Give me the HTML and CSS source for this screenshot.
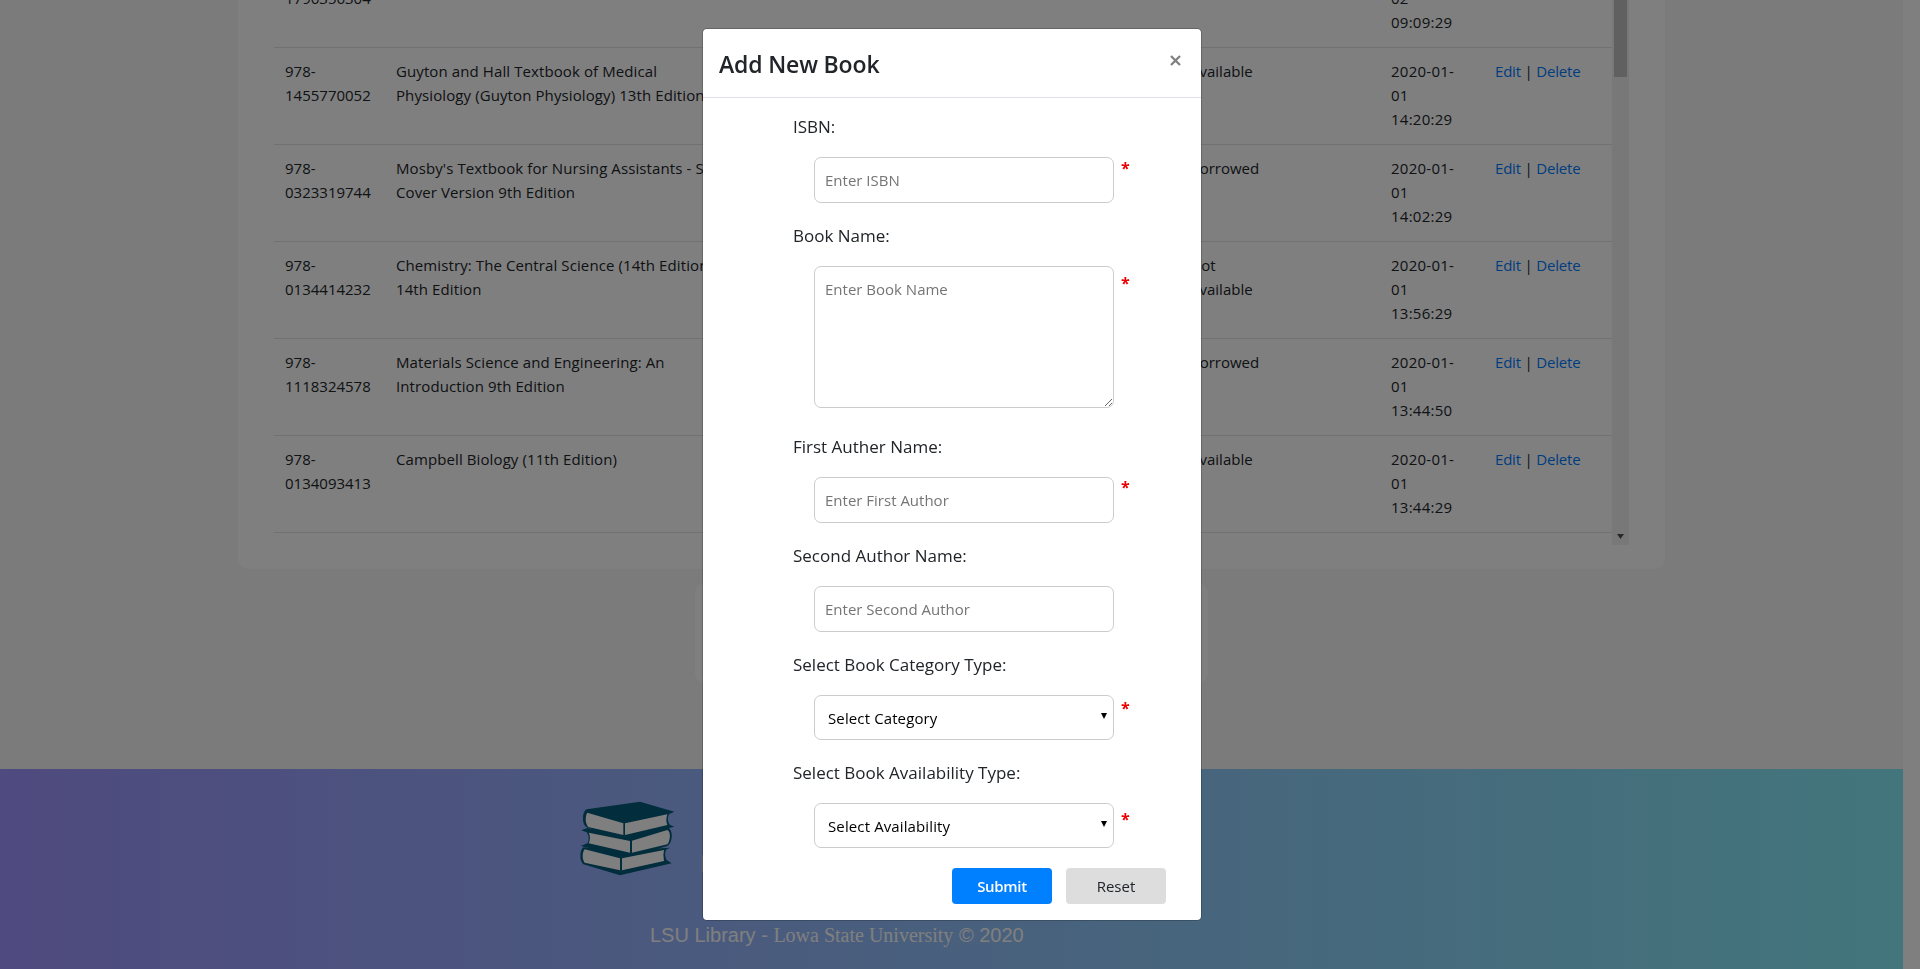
FILE: index.html
```html
<!DOCTYPE html>
<html lang="en">
<head>
<meta charset="utf-8">
<title>LSU Library</title>
<link rel="stylesheet" href="styles.css">
</head>
<body>
<div class="page">
  <main class="main">
    <section class="card">
      <div class="table-wrap">
        <table class="books">
          <colgroup><col class="c-isbn"><col class="c-name"><col class="c-status"><col class="c-date"><col class="c-action"></colgroup>
          <tbody>
            <tr><td>978-<br>1796356304</td><td></td><td></td><td class="date">2020-01-<br>02<br>09:09:29</td><td></td></tr>
            <tr><td>978-<br>1455770052</td><td class="name">Guyton and Hall Textbook of Medical<br>Physiology (Guyton Physiology) 13th Edition</td><td>Available</td><td class="date">2020-01-<br>01<br>14:20:29</td><td class="action"><a>Edit</a> | <a>Delete</a></td></tr>
            <tr><td>978-<br>0323319744</td><td class="name">Mosby's Textbook for Nursing Assistants - Soft<br>Cover Version 9th Edition</td><td>Borrowed</td><td class="date">2020-01-<br>01<br>14:02:29</td><td class="action"><a>Edit</a> | <a>Delete</a></td></tr>
            <tr><td>978-<br>0134414232</td><td class="name">Chemistry: The Central Science (14th Edition)<br>14th Edition</td><td>Not<br>Available</td><td class="date">2020-01-<br>01<br>13:56:29</td><td class="action"><a>Edit</a> | <a>Delete</a></td></tr>
            <tr><td>978-<br>1118324578</td><td class="name">Materials Science and Engineering: An<br>Introduction 9th Edition</td><td>Borrowed</td><td class="date">2020-01-<br>01<br>13:44:50</td><td class="action"><a>Edit</a> | <a>Delete</a></td></tr>
            <tr><td>978-<br>0134093413</td><td class="name">Campbell Biology (11th Edition)</td><td>Available</td><td class="date">2020-01-<br>01<br>13:44:29</td><td class="action"><a>Edit</a> | <a>Delete</a></td></tr>
          </tbody>
        </table>
      </div>
      <div class="scrollbar">
        <div class="thumb"></div>
        <svg class="scroll-arrow" width="7" height="5" viewBox="0 0 7 5"><path d="M0 0h7L3.500 5z" fill="#505050"/></svg>
      </div>
    </section>
    <section class="card small"></section>
  </main>
  <footer class="footer">
    <div class="brand">
      <svg class="logo" viewBox="0 0 285 228" width="95" height="76">
        <g fill="#045a78">
          <path d="M10 142C-2 150 -2 185 10 193L120 226 275 190 260 180C254 170 254 155 260 148L270 143 150 150z"/>
          <path d="M4 91L22 84 140 105 262 82C282 90 278 130 262 138L150 170 2 138 22 130C28 122 28 108 20 97z"/>
          <path d="M20 28C5 35 5 75 20 82L130 118 283 80 270 75C262 65 262 50 268 42L283 35 180 5z"/>
        </g>
        <g fill="#fff">
          <path d="M22 38L130 70V105L25 81C15 70 15 50 22 38z"/>
          <path d="M135 70L262 43C258 55 258 65 262 75L135 105z"/>
          <path d="M26 98L150 123V158L26 130C32 118 30 105 26 98z"/>
          <path d="M156 122L262 90C274 95 270 125 262 133L156 158z"/>
          <path d="M14 148L120 175V211L14 188C6 178 6 158 14 148z"/>
          <path d="M126 175L252 150Q248 166 252 183L126 211z"/>
        </g>
      </svg>
      <span class="brand-name">LSU</span>
    </div>
    <p class="copy">LSU Library - <span class="uni">Lowa State University</span> © 2020</p>
  </footer>
</div>
<div class="backdrop">
  <div class="modal">
    <header class="modal-header">
      <h4 class="title">Add New Book</h4>
      <svg class="close" width="11" height="11" viewBox="0 0 11 11"><path d="M1 1l9 9M10 1l-9 9" stroke="#808080" stroke-width="2.300"/></svg>
    </header>
    <form class="form">
      <label class="label">ISBN:</label>
      <div class="row"><input class="control" placeholder="Enter ISBN"><span class="star s1">*</span></div>
      <label class="label">Book Name:</label>
      <div class="row tall"><textarea class="control area" placeholder="Enter Book Name"></textarea><span class="star s2">*</span></div>
      <label class="label">First Auther Name:</label>
      <div class="row"><input class="control" placeholder="Enter First Author"><span class="star s3">*</span></div>
      <label class="label">Second Author Name:</label>
      <div class="row"><input class="control" placeholder="Enter Second Author"></div>
      <label class="label">Select Book Category Type:</label>
      <div class="row">
        <div class="control select"><span>Select Category</span><svg width="6" height="6" viewBox="0 0 6 6"><path d="M0 0h6L3 6z"/></svg></div>
        <span class="star s4">*</span>
      </div>
      <label class="label">Select Book Availability Type:</label>
      <div class="row">
        <div class="control select"><span>Select Availability</span><svg width="6" height="6" viewBox="0 0 6 6"><path d="M0 0h6L3 6z"/></svg></div>
        <span class="star s5">*</span>
      </div>
      <div class="actions">
        <button type="button" class="btn primary">Submit</button>
        <button type="button" class="btn">Reset</button>
      </div>
    </form>
  </div>
</div>
</body>
</html>
```
FILE: styles.css
```css
* { box-sizing: border-box; }
html, body { height: 100%; }
body {
  margin: 0;
  overflow: hidden;
  background: #fff;
  color: #212529;
  font: 15px/24px "Open Sans", "Noto Sans", sans-serif;
}
.page { width: 1903px; height: 969px; display: flex; flex-direction: column; background: #f6f6f6; }
.main { height: 769px; display: flex; flex-direction: column; align-items: center; gap: 14px; }
.card {
  width: 1427px;
  height: 569px;
  display: flex;
  padding: 0 36px 24px 36px;
  background: #fff;
  border-radius: 0 0 10px 10px;
}
.card.small { width: 513px; height: 100px; padding: 0; border-radius: 10px; }
.table-wrap {
  width: 1338px;
  height: 545px;
  padding-bottom: 12px;
  display: flex;
  flex-direction: column;
  justify-content: flex-end;
  overflow: hidden;
}
.books { width: 1338px; flex: none; table-layout: fixed; border-collapse: collapse; }
.books td {
  height: 97px;
  padding: 11px 12px 12px 11px;
  vertical-align: top;
  white-space: nowrap;
  border-top: 1px solid #dee2e6;
}
.books tr:last-child td { border-bottom: 1px solid #dee2e6; }
.name { letter-spacing: .1px; }
.date { letter-spacing: .25px; }
.action { letter-spacing: -.2px; }
.c-isbn { width: 111px; }
.c-name { width: 794px; }
.c-status { width: 201px; }
.c-date { width: 104px; }
.c-action { width: 128px; }
.books a { color: #007bff; }
.scrollbar {
  width: 17px;
  height: 545px;
  display: flex;
  flex-direction: column;
  justify-content: space-between;
  align-items: center;
  padding-bottom: 6px;
  background: #f1f1f1;
}
.thumb { width: 13px; height: 77px; background: #c1c1c1; }
.footer {
  height: 200px;
  padding: 31px 0 0 580px;
  display: flex;
  flex-direction: column;
  align-items: flex-start;
  background: linear-gradient(90deg, #9e94ff, #86ecf8);
}
.brand { height: 76px; display: flex; align-items: flex-end; }
.logo { display: block; }
.brand-name {
  margin-left: 25px;
  font: 24px/24px "Liberation Sans", Arial, sans-serif;
  color: #e4e4e4;
}
.copy {
  margin: 47px 0 0 70px;
  font: 20px/24px "Liberation Sans", Arial, sans-serif;
  color: #fff;
  white-space: nowrap;
}
.uni { font-family: "Liberation Serif", "Times New Roman", serif; }
.backdrop {
  position: fixed;
  inset: 0;
  padding-top: 29px;
  padding-left: 703px;
  background: rgba(0, 0, 0, .5);
}
.modal {
  width: 498px;
  height: 891px;
  background: #fff;
  border-radius: 4px;
  box-shadow: 0 0 0 1px rgba(0, 0, 0, .2);
}
.modal-header {
  height: 69px;
  padding: 16px 20px 0 16px;
  display: flex;
  justify-content: space-between;
  align-items: flex-start;
  border-bottom: 1px solid #dee2e6;
}
.title { margin: 0; font-size: 23px; line-height: 38px; font-weight: 600; letter-spacing: -.15px; }
.close { margin-top: 10px; }
.form { padding: 16px 35px 0 90px; display: flex; flex-direction: column; }
.label { height: 27px; margin-bottom: 16px; font-size: 17px; line-height: 26px; white-space: nowrap; }
.row { display: flex; align-items: flex-start; margin: 0 0 20px 21px; }
.row.tall { margin-bottom: 26px; }
.control {
  width: 300px;
  height: 46px;
  padding: 0 10px;
  border: 1px solid #ccc;
  border-radius: 7px;
  background: #fff;
  font: 15px/24px "Open Sans", "Noto Sans", sans-serif;
  color: #000;
  outline: none;
}
.control::placeholder { color: #757575; opacity: 1; }
.area { height: 142px; padding-top: 10px; display: block; resize: vertical; }
.select { height: 45px; padding: 0 6px 0 13px; display: flex; align-items: center; justify-content: space-between; letter-spacing: .12px; }
.select svg { margin-bottom: 3px; }
.star { margin-left: 7px; color: #e00; font-size: 16px; line-height: 20px; font-weight: 700; }
.s1 { margin-top: 1px; }
.s2 { margin-top: 7px; }
.s3 { margin-top: 0; }
.s4 { margin-top: 3px; }
.s5 { margin-top: 6px; }
.actions { display: flex; justify-content: flex-end; gap: 14px; }
.btn {
  width: 100px;
  height: 36px;
  padding: 0;
  border: 0;
  border-radius: 4px;
  background: #ddd;
  color: #212529;
  font: 15px/24px "Open Sans", "Noto Sans", sans-serif;
}
.btn.primary { background: #007fff; color: #fff; font-weight: 600; letter-spacing: -.3px; }
```
